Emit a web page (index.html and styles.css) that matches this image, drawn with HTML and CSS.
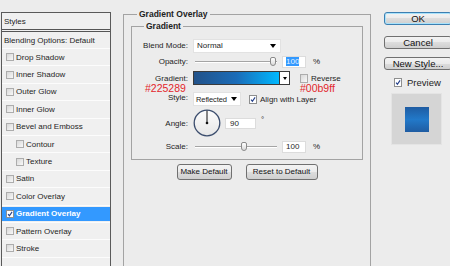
FILE: index.html
```html
<!DOCTYPE html>
<html lang="en">
<head>
  <meta charset="UTF-8" />
  <title>Layer Style</title>
  <link rel="stylesheet" href="styles.css">
</head>
<body>
  <div class="dialog">
    <ul class="styles">
      <li class="head">Styles</li>
      <li class="blend">Blending Options: Default</li>
      <li><span class="cb"></span>Drop Shadow</li>
      <li><span class="cb"></span>Inner Shadow</li>
      <li><span class="cb"></span>Outer Glow</li>
      <li><span class="cb"></span>Inner Glow</li>
      <li><span class="cb"></span>Bevel and Emboss</li>
      <li class="sub"><span class="cb"></span>Contour</li>
      <li class="sub"><span class="cb"></span>Texture</li>
      <li><span class="cb"></span>Satin</li>
      <li><span class="cb"></span>Color Overlay</li>
      <li class="active"><span class="cb on"><svg viewBox="0 0 8 8"><path d="M1.4 4.2 L3.2 6.3 L6.8 1.2" /></svg></span>Gradient Overlay</li>
      <li><span class="cb"></span>Pattern Overlay</li>
      <li><span class="cb"></span>Stroke</li>
    </ul>

    <fieldset class="panel">
      <legend>Gradient Overlay</legend>
      <fieldset class="group">
        <legend>Gradient</legend>

        <div class="row r1">
          <label>Blend Mode:</label>
          <div class="select w-blend">Normal</div>
        </div>

        <div class="row r2">
          <label>Opacity:</label>
          <div class="slider"><span class="knob" style="left: 77px"></span></div>
          <div class="num"><span class="sel">100</span></div>
          <span class="unit">%</span>
        </div>

        <div class="row r3">
          <label>Gradient:</label>
          <div class="grad"></div>
          <div class="grad-btn"></div>
          <span class="cb rev"></span>
          <span class="opt">Reverse</span>
          <span class="note n1">#225289</span>
          <span class="note n2">#00b9ff</span>
        </div>

        <div class="row r4">
          <label>Style:</label>
          <div class="select w-style">Reflected</div>
          <span class="cb on align"><svg viewBox="0 0 8 8"><path d="M1.4 4.2 L3.2 6.3 L6.8 1.2" /></svg></span>
          <span class="opt">Align with Layer</span>
        </div>

        <div class="row r5">
          <label>Angle:</label>
          <svg class="dial" viewBox="0 0 28 28">
            <defs>
              <linearGradient id="dialFill" x1="0" y1="0" x2="0" y2="1">
                <stop offset="0" stop-color="#fdfdfd" />
                <stop offset="1" stop-color="#e6e6e6" />
              </linearGradient>
            </defs>
            <circle cx="14" cy="14" r="12.8" fill="url(#dialFill)" stroke="#3b4d6d" stroke-width="1.3" />
            <line x1="14" y1="14" x2="14" y2="1.6" stroke="#111" stroke-width="1" />
            <circle cx="14" cy="14" r="1.3" fill="#111" />
          </svg>
          <div class="num angle">90</div>
          <span class="deg">°</span>
        </div>

        <div class="row r6">
          <label>Scale:</label>
          <div class="slider"><span class="knob" style="left: 48px"></span></div>
          <div class="num">100</div>
          <span class="unit">%</span>
        </div>
      </fieldset>

      <div class="actions">
        <button class="btn make">Make Default</button>
        <button class="btn reset">Reset to Default</button>
      </div>
    </fieldset>

    <div class="side">
      <button class="btn ok">OK</button>
      <button class="btn cancel">Cancel</button>
      <button class="btn newstyle">New Style...</button>
      <div class="preview">
        <span class="cb on"><svg viewBox="0 0 8 8"><path d="M1.4 4.2 L3.2 6.3 L6.8 1.2" /></svg></span>
        Preview
      </div>
      <div class="thumb-box"><div class="swatch"></div></div>
    </div>
  </div>
</body>
</html>
```

FILE: styles.css
```css
body {
  margin: 0;
  width: 450px;
  height: 266px;
  overflow: hidden;
  background: #ececec;
  font-family: "Liberation Sans", Arial, sans-serif;
  font-size: 8px;
  color: #1e1e1e;
}
.dialog {
  display: flex;
  align-items: flex-start;
}

/* styles list */
.styles {
  list-style: none;
  flex: none;
  margin: 12px 0 0 1px;
  padding: 0;
  width: 110px;
  height: 254px;
  box-sizing: border-box;
  border: 1px solid #5a5a5a;
  border-bottom: none;
  background: #f0f0f0;
}
.styles li {
  display: flex;
  align-items: center;
  height: 14.4px;
  padding: 1px 0;
  border-bottom: 1px solid #fcfcfc;
}
.styles .head {
  height: 16px;
  padding: 0 2px;
  border-bottom: 3px double #555;
}
.styles .blend {
  height: 14px;
  padding: 1px 2px;
}
.styles .cb {
  margin: 0 2px 0 4px;
}
.styles .sub .cb {
  margin-left: 14px;
}
.styles .active {
  background: #3399ff;
  background-clip: content-box;
  color: #fff;
  font-weight: bold;
}

/* checkbox */
.cb {
  flex: none;
  display: inline-flex;
  width: 8px;
  height: 8px;
  box-sizing: border-box;
  border: 1px solid #acacac;
  background: linear-gradient(135deg, #d8d8d8, #f8f8f8);
}
.cb.on {
  border-color: #8e8f8f;
  background: #fff;
}
.cb svg {
  width: 100%;
  height: 100%;
  overflow: visible;
}
.cb path {
  fill: none;
  stroke: #24408a;
  stroke-width: 1.5;
}

/* main panel */
.panel {
  flex: none;
  margin: 9px 0 0 12px;
  padding: 0 7px;
  width: 248px;
  height: 257px;
  box-sizing: border-box;
  border: 1px solid #a3a3a3;
  border-bottom: none;
}
.panel legend {
  padding: 0 2px;
  font-size: 8.5px;
  line-height: 10px;
  font-weight: bold;
  color: #222;
}
.panel > legend {
  margin-left: 6px;
}
.group {
  position: relative;
  margin: 2px 0 0;
  padding: 7px 0 6px;
  border: 1px solid #a3a3a3;
}
.group > legend {
  margin-left: 12px;
}

.row {
  position: relative;
  display: flex;
  align-items: center;
}
.row label {
  flex: none;
  width: 56px;
  margin-right: 5px;
  text-align: right;
}
.r1 { height: 15px; }
.r2 { height: 15px; margin-top: 1px; }
.r3 { height: 16px; margin-top: 1px; }
.r4 { height: 14px; margin-top: 6px; }
.r4 label { margin-bottom: 3px; }
.r5 { height: 28px; margin-top: 3px; }
.r6 { height: 13px; margin-top: 3px; }

.select {
  display: flex;
  align-items: center;
  justify-content: space-between;
  height: 14px;
  box-sizing: border-box;
  padding: 0 4px 0 3px;
  background: #fff;
  border: 1px solid #e2e2e2;
}
.select::after {
  content: "";
  border-left: 3px solid transparent;
  border-right: 3px solid transparent;
  border-top: 4px solid #000;
}
.w-blend { width: 88px; }
.w-style {
  width: 48px;
  padding: 0 3px 0 2px;
  font-size: 7.5px;
  letter-spacing: -0.1px;
}

.slider {
  position: relative;
  width: 86px;
  height: 10px;
  flex: none;
}
.slider::before {
  content: "";
  position: absolute;
  left: 2px;
  right: 2px;
  top: 4px;
  border-top: 1px solid #a4a4a4;
  border-bottom: 1px solid #fff;
}
.knob {
  position: absolute;
  top: 0;
  width: 6px;
  height: 9px;
  box-sizing: border-box;
  border: 1px solid #8a8a8a;
  border-radius: 2px 2px 3px 3px;
  background: linear-gradient(#ffffff, #dadada);
}

.num {
  flex: none;
  width: 24px;
  height: 12px;
  box-sizing: border-box;
  margin-left: 3px;
  padding-left: 3px;
  line-height: 10px;
  background: #fff;
  border: 1px solid #dcdcdc;
}
.sel {
  background: #3399ff;
  color: #e4f2ff;
}
.unit {
  margin-left: 7px;
}
.angle {
  width: 31px;
  height: 11px;
  margin-left: 4px;
  padding-left: 4px;
  line-height: 9px;
}
.deg {
  align-self: flex-start;
  margin: 6px 0 0 5px;
}
.dial {
  flex: none;
  width: 28px;
  height: 28px;
}

.grad {
  width: 87px;
  height: 14px;
  box-sizing: border-box;
  border: 1px solid #3a3a3a;
  background: linear-gradient(90deg, #225289, #1b6cb8 50%, #00b9ff);
}
.grad-btn {
  display: flex;
  align-items: center;
  justify-content: center;
  width: 10px;
  height: 14px;
  box-sizing: border-box;
  border: 1px solid #3a3a3a;
  border-left: none;
  background: #fff;
}
.grad-btn::after {
  content: "";
  border-left: 2.5px solid transparent;
  border-right: 2.5px solid transparent;
  border-top: 3px solid #000;
}
.rev {
  margin-left: 10px;
  height: 9px;
}
.align {
  margin-left: 8px;
  height: 9px;
}
.opt {
  margin-left: 3px;
}
.note {
  position: absolute;
  top: 13px;
  font-size: 10.5px;
  line-height: 10px;
  color: #e3262b;
}
.n1 { left: 13px; }
.n2 { left: 168px; }

/* buttons */
.btn {
  flex: none;
  padding: 0;
  height: 13px;
  box-sizing: border-box;
  border: 1px solid #707070;
  border-radius: 3px;
  background: linear-gradient(#f3f3f3, #ebebeb 50%, #dddddd 50%, #cfcfcf);
  font: inherit;
  line-height: 11px;
  color: #111;
  text-align: center;
}
.actions {
  display: flex;
  justify-content: center;
  gap: 14px;
  margin-top: 4px;
}
.actions .btn {
  height: 16px;
  line-height: 14px;
}
.make { width: 55px; }
.reset { width: 72px; }

/* right column */
.side {
  flex: none;
  display: flex;
  flex-direction: column;
  width: 68px;
  margin: 12px 0 0 13px;
  font-size: 9.5px;
}
.ok {
  border-color: #3c7fb1;
  box-shadow: inset 0 0 0 1px #a8e2fb;
}
.cancel { margin-top: 11px; }
.newstyle { margin-top: 8px; }
.preview {
  display: flex;
  align-items: center;
  gap: 5px;
  height: 11px;
  margin: 7px 0 0 10px;
}
.preview .cb {
  width: 8px;
  height: 9px;
}
.thumb-box {
  display: flex;
  align-items: center;
  justify-content: center;
  width: 51px;
  height: 52px;
  box-sizing: border-box;
  margin: 5px 0 0 7px;
  background: #d5d5d5;
  border: 1px solid #e4e4e4;
}
.swatch {
  width: 24px;
  height: 25px;
  background: linear-gradient(#1f5ca2, #2279c9 50%, #1f5ca2);
}
```
